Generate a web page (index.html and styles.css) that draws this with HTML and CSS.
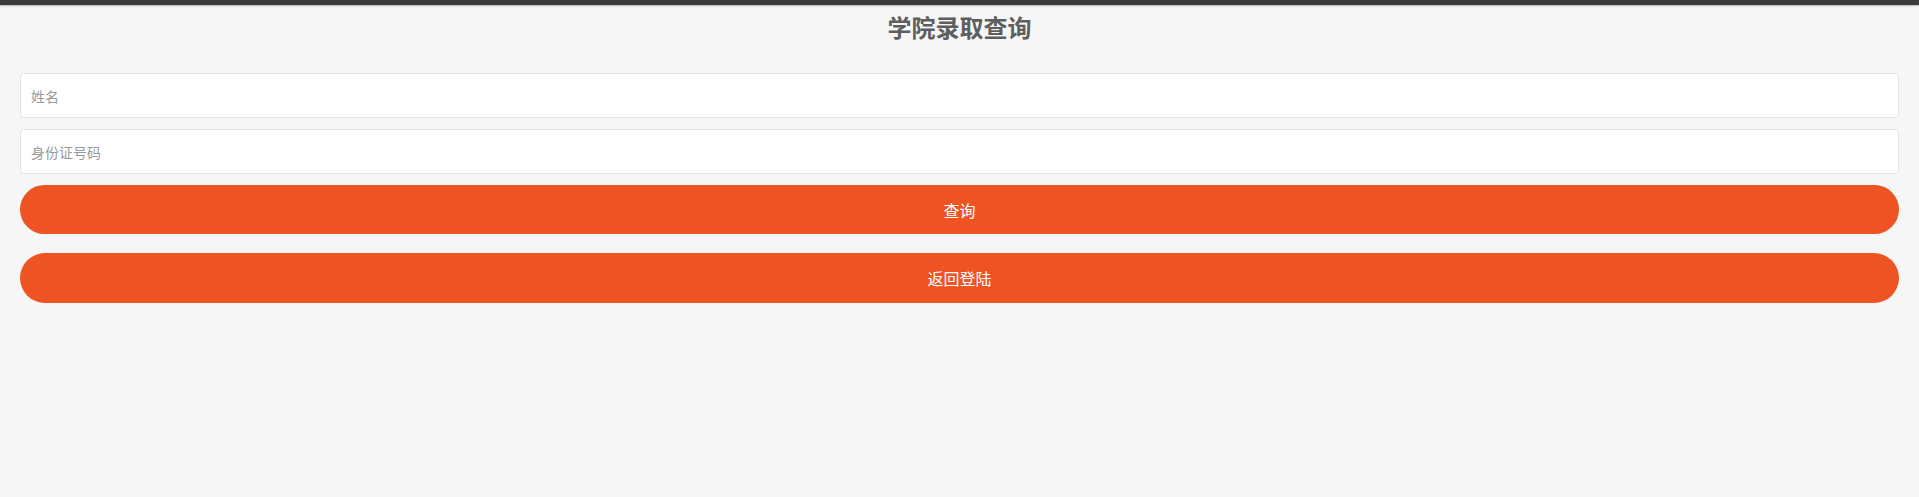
FILE: index.html
```html
<!DOCTYPE html>
<html lang="zh-CN">
<head>
<meta charset="utf-8">
<title>学院录取查询</title>
<link rel="stylesheet" href="styles.css">
</head>
<body>
<div class="topbar"></div>
<h1 class="title">学院录取查询</h1>
<form class="form">
  <input class="field" type="text" placeholder="姓名">
  <input class="field" type="text" placeholder="身份证号码">
  <button class="btn btn-query" type="button">查询</button>
  <button class="btn btn-back" type="button">返回登陆</button>
</form>
</body>
</html>
```
FILE: styles.css
```css
html, body {
  margin: 0;
  padding: 0;
  background: #f6f6f6;
  font-family: "Noto Sans CJK SC", "Noto Sans", sans-serif;
}
.topbar {
  height: 5px;
  background: #3b3b3b;
  box-shadow: 0 1px 2px rgba(0,0,0,0.25);
}
.title {
  margin: 5px 0 0;
  height: 34px;
  line-height: 34px;
  font-size: 24px;
  font-weight: bold;
  color: #5e5e5e;
  text-align: center;
}
.form {
  display: flex;
  flex-direction: column;
  padding: 0 20px;
  margin-top: 29px;
}
.field {
  box-sizing: border-box;
  height: 45px;
  margin: 0 0 11px;
  padding: 0 10px;
  border: 1px solid #e3e3e3;
  border-radius: 4px;
  background: #fff;
  font-family: inherit;
  font-size: 14px;
  color: #333;
  outline: none;
}
.field::placeholder {
  color: #9a9a9a;
}
.btn {
  box-sizing: border-box;
  height: 49px;
  border: none;
  border-radius: 25px;
  background: #ee5324;
  color: #fff;
  font-family: inherit;
  font-size: 16px;
  padding: 0;
}
.btn-back {
  height: 50px;
  margin-top: 19px;
}
```
